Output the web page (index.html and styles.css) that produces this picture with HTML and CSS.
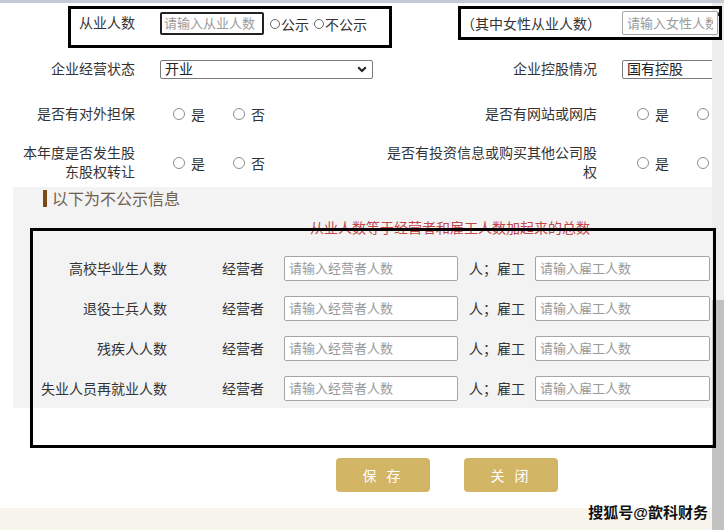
FILE: index.html
```html
<!DOCTYPE html>
<html lang="zh-CN">
<head>
    <meta charset="UTF-8">
    <meta name="viewport" content="width=device-width, initial-scale=1.0">
    <title>年度报告 - 企业基本信息</title>
    <link rel="stylesheet" href="styles.css">
</head>
<body>
    <div class="topbar"></div>

    <!-- 公示信息 -->
    <div class="row row-first">
        <div class="mark mark-a">
            <span class="label label-a">从业人数</span>
            <input type="text" class="ipt ipt-focus" placeholder="请输入从业人数">
            <span class="opt"><i class="dot dot-sm"></i>公示</span>
            <span class="opt"><i class="dot dot-sm"></i>不公示</span>
        </div>
        <div class="mark mark-b">
            <span class="label label-b">（其中女性从业人数）</span>
            <input type="text" class="ipt ipt-female" placeholder="请输入女性人数">
        </div>
    </div>

    <div class="row row-2">
        <span class="label label-l">企业经营状态</span>
        <div class="select select-l">
            <span>开业</span>
            <svg width="10" height="7" viewBox="0 0 10 7"><path d="M1.2 1.2 L5 5 L8.8 1.2" fill="none" stroke="#222" stroke-width="2"/></svg>
        </div>
        <span class="label label-r">企业控股情况</span>
        <div class="select select-r"><span>国有控股</span></div>
    </div>

    <div class="row row-3">
        <span class="label label-l">是否有对外担保</span>
        <div class="radios radios-l">
            <span class="opt opt-w"><i class="dot"></i>是</span>
            <span class="opt opt-w"><i class="dot"></i>否</span>
        </div>
        <span class="label label-r">是否有网站或网店</span>
        <div class="radios radios-r">
            <span class="opt opt-w"><i class="dot"></i>是</span>
            <span class="opt opt-w"><i class="dot"></i></span>
        </div>
    </div>

    <div class="row row-4">
        <span class="label label-l">本年度是否发生股东股权转让</span>
        <div class="radios radios-l">
            <span class="opt opt-w"><i class="dot"></i>是</span>
            <span class="opt opt-w"><i class="dot"></i>否</span>
        </div>
        <span class="label label-r">是否有投资信息或购买其他公司股权</span>
        <div class="radios radios-r">
            <span class="opt opt-w"><i class="dot"></i>是</span>
            <span class="opt opt-w"><i class="dot"></i></span>
        </div>
    </div>

    <!-- 不公示信息 -->
    <div class="private">
        <div class="private-title"><span class="bar"></span>以下为不公示信息</div>
        <p class="note">从业人数等于经营者和雇工人数加起来的总数</p>

        <div class="staff-row">
            <span class="staff-label">高校毕业生人数</span>
            <span class="staff-tag">经营者</span>
            <input type="text" class="ipt ipt-staff ipt-owner" placeholder="请输入经营者人数">
            <span class="staff-unit">人；雇工</span>
            <input type="text" class="ipt ipt-staff ipt-emp" placeholder="请输入雇工人数">
        </div>
        <div class="staff-row">
            <span class="staff-label">退役士兵人数</span>
            <span class="staff-tag">经营者</span>
            <input type="text" class="ipt ipt-staff ipt-owner" placeholder="请输入经营者人数">
            <span class="staff-unit">人；雇工</span>
            <input type="text" class="ipt ipt-staff ipt-emp" placeholder="请输入雇工人数">
        </div>
        <div class="staff-row">
            <span class="staff-label">残疾人人数</span>
            <span class="staff-tag">经营者</span>
            <input type="text" class="ipt ipt-staff ipt-owner" placeholder="请输入经营者人数">
            <span class="staff-unit">人；雇工</span>
            <input type="text" class="ipt ipt-staff ipt-emp" placeholder="请输入雇工人数">
        </div>
        <div class="staff-row">
            <span class="staff-label">失业人员再就业人数</span>
            <span class="staff-tag">经营者</span>
            <input type="text" class="ipt ipt-staff ipt-owner" placeholder="请输入经营者人数">
            <span class="staff-unit">人；雇工</span>
            <input type="text" class="ipt ipt-staff ipt-emp" placeholder="请输入雇工人数">
        </div>

        <div class="mark-box"></div>
    </div>

    <div class="actions">
        <button class="btn">保 存</button>
        <button class="btn">关 闭</button>
    </div>

    <div class="footer-band"></div>

    <div class="scrollbar">
        <span class="scroll-up"></span>
        <span class="scroll-thumb"></span>
    </div>
    <div class="watermark">搜狐号@歆科财务</div>
</body>
</html>
```

FILE: styles.css
```css
body {
    margin: 0;
    width: 724px;
    height: 530px;
    overflow: hidden;
    position: relative;
    background-color: #fff;
    font-family: "Liberation Sans", "Noto Sans CJK SC", sans-serif;
    font-size: 14px;
    color: #333;
}
.topbar {
    height: 3px;
    background-color: #c4cad3;
}
.row {
    display: flex;
    align-items: center;
}
.row > * {
    flex-shrink: 0;
}
.label {
    text-align: right;
    line-height: 19px;
}
.label-l {
    margin-left: 15px;
    width: 120px;
}
.label-r {
    margin-left: 9px;
    width: 215px;
}

/* first row, framed */
.row-first {
    margin-top: 3px;
    height: 42px;
    align-items: flex-start;
}
.mark {
    position: relative;
    z-index: 2;
    display: flex;
    align-items: center;
    box-sizing: border-box;
    border: 3px solid #000;
}
.mark-a {
    margin-left: 68px;
    width: 324px;
    height: 42px;
    padding: 3px 0 10px;
}
.mark-b {
    margin-left: 66px;
    width: 264px;
    height: 34px;
    padding: 2px 0;
    overflow: hidden;
}
.label-a {
    width: 64px;
}
.label-b {
    width: 140px;
    white-space: nowrap;
    text-align: left;
    font-family: "Noto Sans CJK SC", sans-serif;
}
.ipt {
    box-sizing: border-box;
    font-family: inherit;
    font-size: 13px;
    color: #333;
    background-color: #fff;
    border: 1px solid #a5a5a5;
    border-radius: 2px;
    padding: 0 4px;
    margin: 0;
    outline: none;
}
.ipt::placeholder {
    color: #9a9a9a;
}
.ipt-focus {
    margin-left: 25px;
    width: 104px;
    height: 23px;
    border: 2px solid #222;
    padding: 0 2px;
}
.ipt-female {
    margin-left: 21px;
    width: 96px;
    height: 24px;
    flex-shrink: 0;
}
.opt {
    display: flex;
    align-items: center;
}
.mark-a .opt {
    margin-left: 6px;
}
.mark-a .opt + .opt {
    margin-left: 5px;
}
.dot {
    display: inline-block;
    box-sizing: border-box;
    width: 12px;
    height: 12px;
    border: 1px solid #8e8e8e;
    border-radius: 50%;
    background-color: #fff;
    margin-right: 6px;
}
.dot-sm {
    width: 10px;
    height: 10px;
    margin-right: 1px;
    border-color: #666;
}

/* selects */
.row-2 {
    height: 42px;
}
.select {
    box-sizing: border-box;
    height: 19px;
    border: 1px solid #7a7a7a;
    border-radius: 2px;
    display: flex;
    align-items: center;
    justify-content: space-between;
    padding: 0 5px 0 4px;
    line-height: 17px;
    color: #222;
}
.select-l {
    margin-left: 25px;
    width: 213px;
}
.select-r {
    margin-left: 25px;
    width: 100px;
}

/* radios */
.row-3 {
    height: 48px;
}
.row-4 {
    height: 49px;
}
.radios {
    display: flex;
    align-items: center;
}
.radios-l {
    margin-left: 25px;
    width: 213px;
    padding-left: 13px;
    box-sizing: border-box;
}
.radios-r {
    margin-left: 25px;
    padding-left: 15px;
    width: 90px;
    box-sizing: border-box;
}
.opt-w {
    width: 60px;
    flex-shrink: 0;
}

/* hidden info block */
.private {
    position: relative;
    margin-left: 13px;
    width: 699px;
    background-color: #f3f3f3;
}
.private-title {
    height: 22px;
    display: flex;
    align-items: center;
    padding-left: 30px;
    font-size: 16px;
    color: #6f6150;
}
.bar {
    width: 4px;
    height: 17px;
    background-color: #7a4a14;
    margin-right: 5px;
}
.note {
    margin: 10px 0 11px;
    padding-left: 297px;
    height: 18px;
    line-height: 18px;
    color: #c2474a;
}
.staff-row {
    height: 40px;
    display: flex;
    align-items: center;
}
.staff-label {
    width: 154px;
    text-align: right;
}
.staff-tag {
    margin-left: 55px;
    width: 42px;
}
.ipt-staff {
    height: 25px;
}
.ipt-owner {
    margin-left: 20px;
    width: 174px;
}
.staff-unit {
    margin-left: 11px;
    width: 56px;
}
.ipt-emp {
    margin-left: 10px;
    width: 175px;
}
.mark-box {
    position: absolute;
    z-index: 3;
    left: 17px;
    top: 41px;
    width: 686px;
    height: 220px;
    box-sizing: border-box;
    border: 3px solid #000;
}

/* buttons */
.actions {
    display: flex;
    gap: 34px;
    padding-left: 336px;
    margin-top: 50px;
}
.btn {
    width: 94px;
    height: 34px;
    border: none;
    border-radius: 4px;
    background-color: #d3b566;
    color: #fff;
    font-family: inherit;
    font-size: 14px;
    letter-spacing: 3px;
}
.footer-band {
    margin-top: 16px;
    height: 22px;
    background-color: #f7f5eb;
}

/* window scrollbar */
.scrollbar {
    position: absolute;
    z-index: 1;
    top: 3px;
    right: 0;
    bottom: 0;
    width: 12px;
    background-color: #ededed;
}
.scroll-up {
    position: absolute;
    top: 9px;
    left: 3px;
    border-left: 3px solid transparent;
    border-right: 3px solid transparent;
    border-bottom: 4px solid #333;
}
.scroll-thumb {
    position: absolute;
    top: 297px;
    left: 0;
    right: 0;
    bottom: 0;
    background-color: #c2c2c2;
}
.watermark {
    position: absolute;
    z-index: 4;
    right: 16px;
    bottom: 8px;
    font-size: 15px;
    font-weight: bold;
    color: #111;
    text-shadow: 0 0 2px #fff, 0 0 2px #fff;
}
```
